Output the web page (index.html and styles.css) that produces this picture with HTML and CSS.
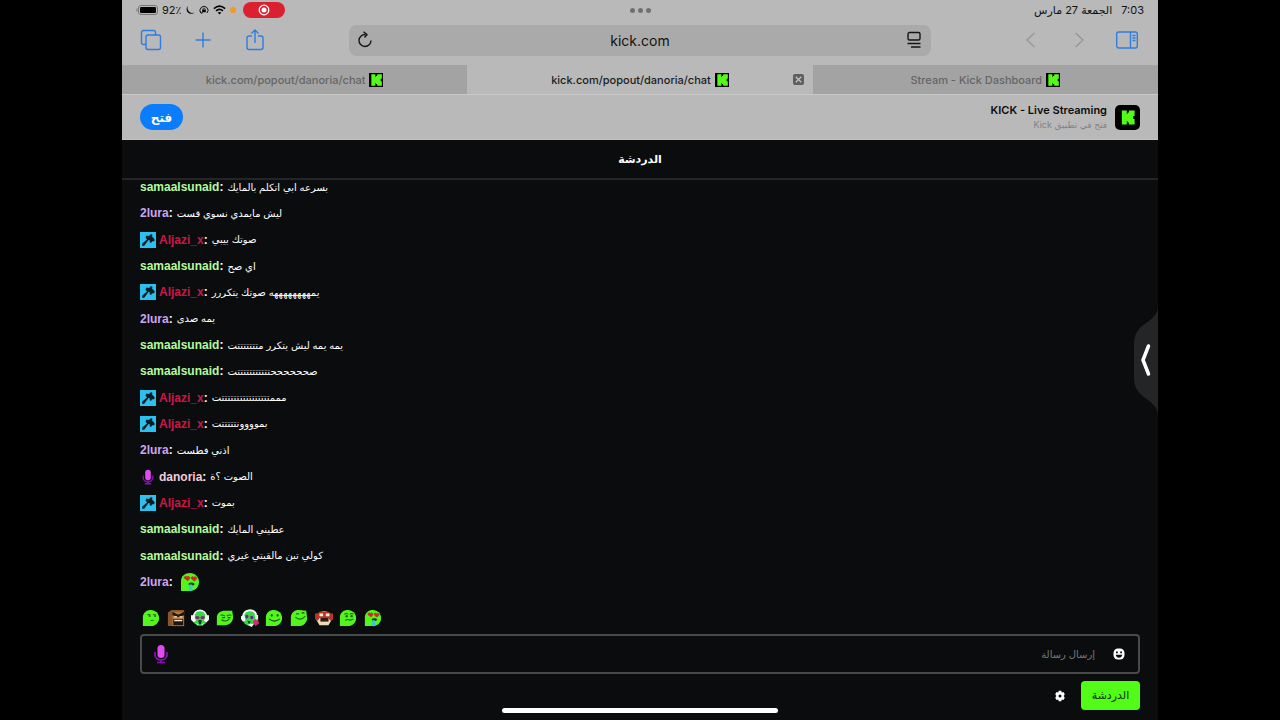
FILE: index.html
```html
<!DOCTYPE html>
<html lang="ar">
<head>
    <meta charset="UTF-8">
    <meta name="viewport" content="width=device-width, initial-scale=1.0">
    <title>kick.com/popout/danoria/chat</title>
    <link rel="stylesheet" href="styles.css">
</head>
<body>
    <!-- Shared icons -->
    <svg class="sprite" aria-hidden="true">
        <symbol id="kick" viewBox="0 0 24 24">
            <path d="M4 2h7v5h1V5h2V2h8v8h-2v4h2v8h-8v-3h-2v-2h-1v5H4z" fill="#53fc18"/>
        </symbol>
        <symbol id="hammer" viewBox="0 0 16 16">
            <path d="M0 0h16v16H0z" fill="#2cc0ee"/>
            <path d="M6.500 3.500L9 4l2-2 1.500 1-.5 1.500L14.500 7v2l-2.500.5-1 1.500-1.500-1 .5-1.500-1.500-.5L4 14l-2-.5.3-2L7 7.500 5.500 5.500z" fill="#081c26"/>
        </symbol>
        <symbol id="mic" viewBox="0 0 16 20">
            <rect x="4.500" y="1" width="7" height="13" rx="3.500" fill="#e04af0"/>
            <path d="M2 8v3a6 5 0 0 0 12 0V8M8 16v2M4 18.500h8" fill="none" stroke="#8a10b8" stroke-width="1.700"/>
        </symbol>
        <symbol id="love" viewBox="0 0 20 20">
            <path d="M1 19V9c0-5 4-8 9-8s9 4 9 9-4 9-9 9z" fill="#54f51c"/>
            <path d="M8 8.600L4.700 6.500c-1-2 1.300-3 2.300-1.300 1.300-1.500 3.300-.3 2.500 1.400zM14.500 9l-3-2.300c-.8-2 1.500-2.800 2.300-1.200 1.500-1.500 3.400 0 2.600 1.400z" fill="#d9222a" stroke="#d9222a"/>
            <ellipse cx="11.500" cy="12" rx="3" ry="1.600" fill="#0d4510"/>
            <path d="M9.300 12.500h3V18l-1.500 1.500L9 18z" fill="#36c9d8"/>
        </symbol>
        <symbol id="calm" viewBox="0 0 20 20">
            <path d="M1 19V9c0-5 4-8 9-8s9 4 9 9-4 9-9 9z" fill="#54f51c"/>
            <path d="M6 6.500q2-1 3.500 0M12 6.500q2-1 3.500 0M9.500 13q2-1 3.500 0" fill="none" stroke="#17641a"/>
            <circle cx="8.500" cy="7.800" r="1.100" fill="#17641a"/><circle cx="14.500" cy="7.800" r="1.100" fill="#17641a"/>
        </symbol>
        <symbol id="angry" viewBox="0 0 20 20">
            <path d="M1 4l4-3h14v18H1z" fill="#8a572a"/>
            <path d="M6 3h13v16H6z" fill="#b67b3e"/>
            <path d="M6 3l6 3h1l6-3v4l-6 2-7-2zM7 11h11v7H7z" fill="#24140b"/>
            <path d="M8 8h3v1.500H8zM14 8h3v1.500h-3zM8 12h9v1.500H8z" fill="#eee6da"/>
        </symbol>
        <symbol id="headset" viewBox="0 0 20 20">
            <circle cx="10" cy="10" r="8.500" fill="#38d548"/>
            <path d="M3 8C4-.5 16-.5 17 8" fill="none" stroke="#f0f7ef" stroke-width="2"/>
            <path d="M0 7h4l1.500 6L3 15l-3-3zM16 7h4v5l-3 3-2.500-2zM5 15l3 2v2zM15 15l-3 2v2z" fill="#f0f7ef"/>
            <ellipse cx="7" cy="9.500" rx="2.500" ry="1.800" fill="#8b2380"/><ellipse cx="13" cy="9.500" rx="2.500" ry="1.800" fill="#8b2380"/>
            <path d="M8 13q2-2 4 0l-1 4H9z" fill="#163d1c"/>
        </symbol>
        <symbol id="headset-tilt" viewBox="0 0 20 20">
            <circle cx="10" cy="10" r="8.500" fill="#38d548"/>
            <path d="M2 9C3 0 14-1 17 6" fill="none" stroke="#f0f7ef" stroke-width="2"/>
            <path d="M0 8l4-1 1 6-3 1-2-3zM15 5l4 2v5l-3-1zM9 16l5 1-2 3-4-2z" fill="#f0f7ef"/>
            <ellipse cx="6.500" cy="8.500" rx="1.800" ry="2" fill="#702099"/><ellipse cx="12" cy="9.500" rx="1.800" ry="2" fill="#702099"/>
            <path d="M13 14l3-3 1 2 2-1 1 4-4 3z" fill="#e32372"/>
            <path d="M7 13l4 1-2 3z" fill="#163d1c"/>
        </symbol>
        <symbol id="smirk" viewBox="0 0 20 20">
            <path d="M1 18V9c0-4 4-7 9-7h8l1 7c0 5-4 9-9 9z" fill="#54f51c"/>
            <path d="M5 7q2.500-1 5 1M12 8q2-2 5-1M6 12q5 3 9-1" fill="none" stroke="#17641a" stroke-width="1.200"/>
            <path d="M6.500 9H10v1.200H7zM13 9h3.500l-.5 1.200h-3z" fill="#17641a"/>
        </symbol>
        <symbol id="smile" viewBox="0 0 20 20">
            <path d="M1 19V9c0-5 4-8 9-8s9 4 9 9-4 9-9 9z" fill="#54f51c"/>
            <ellipse cx="7.500" cy="7" rx="1" ry="1.500" fill="#124a16"/><ellipse cx="14" cy="7" rx="1" ry="1.500" fill="#124a16"/>
            <path d="M4.500 11q6 5 12 0" fill="none" stroke="#124a16" stroke-width="1.200"/>
        </symbol>
        <symbol id="happy" viewBox="0 0 20 20">
            <path d="M1 19V9c0-5 4-8 9-8l8 1 1 8c0 5-4 9-9 9z" fill="#54f51c"/>
            <path d="M7 6q1-2 3 0M13 5q2-2 3 0M6 9q6 5 11-1" fill="none" stroke="#17641a" stroke-width="1.200"/>
        </symbol>
        <symbol id="rage" viewBox="0 0 20 20">
            <path d="M3 5q7-5 14 0l2 6-4 7H5l-4-7z" fill="#e9dcb8"/>
            <path d="M0 5h3l2-2h10l2 2h3v7l-3 1-2-3H5l-2 3-3-2z" fill="#b93424"/>
            <path d="M5 5h4v3H5zM12 5h4v3h-4z" fill="#fff3dc"/>
            <path d="M6 10h9v4H6z" fill="#3b1711"/>
        </symbol>
        <symbol id="unsure" viewBox="0 0 20 20">
            <path d="M1 19V9c0-5 4-8 9-8s9 4 9 9-4 9-9 9z" fill="#54f51c"/>
            <path d="M6 6q2-2 4 0M12 6q2-2 4 0M7 13q2-2 4-1t5-1" fill="none" stroke="#17641a" stroke-width="1.200"/>
            <circle cx="8.500" cy="8" r="1.300" fill="#17641a"/><circle cx="14" cy="8" r="1.300" fill="#17641a"/>
        </symbol>
    </svg>

    <div class="device">
        <header class="browser">
            <div class="status">
                <div class="status-icons">
                    <svg class="battery" viewBox="0 0 22 10"><path d="M1 3.500v3" stroke="#777" fill="none"/><rect x="2.500" y=".5" width="19" height="9" rx="2.500" fill="none" stroke="#777"/><rect x="4" y="2" width="16" height="6" rx="1.200"/></svg>
                    <span>92٪</span>
                    <svg class="small-icon" viewBox="0 0 10 10"><path d="M3 .8A4.500 4.500 0 1 0 9.500 7.500 5 5 0 0 1 3 .8z"/></svg>
                    <svg class="small-icon" viewBox="0 0 10 10"><path d="M2 8A4 4 0 1 1 8 8M1 6.500L2.200 8.300 4 7.500" fill="none" stroke="#111"/><path d="M3.200 4.700h3.600v2.500H3.200z"/><path d="M4 5V3.500q1-1 2 0V5" fill="none" stroke="#111" stroke-width=".7"/></svg>
                    <svg class="wifi" viewBox="0 0 12 9"><path d="M.8 3.300q5.200-4.600 10.400 0M2.800 5.400q3.200-2.800 6.400 0" fill="none" stroke="#000" stroke-width="1.500"/><path d="M4.300 6.900q1.700-1.300 3.400 0L6 8.700z"/></svg>
                    <span class="dot"></span>
                    <span class="recording"><svg viewBox="0 0 12 12"><circle cx="6" cy="6" r="4.800" fill="none" stroke="#fff" stroke-width="1.300"/><circle cx="6" cy="6" r="2.500" fill="#fff"/></svg></span>
                </div>
                <div class="dots"><i></i><i></i><i></i></div>
                <div class="clock"><span dir="rtl">الجمعة 27 مارس</span><span>7:03</span></div>
            </div>

            <div class="toolbar">
                <div class="tools">
                    <button type="button" class="tool" aria-label="Tabs"><svg viewBox="0 0 22 22"><path d="M6 15.500H3.500a2 2 0 0 1-2-2v-10a2 2 0 0 1 2-2h10a2 2 0 0 1 2 2V6"/><rect x="6" y="6" width="14.500" height="14.500" rx="2"/></svg></button>
                    <button type="button" class="tool" aria-label="New tab"><svg viewBox="0 0 22 22"><path d="M11 3.500v15M3.500 11h15"/></svg></button>
                    <button type="button" class="tool" aria-label="Share"><svg viewBox="0 0 22 22"><path d="M8 7H5a2 2 0 0 0-2 2v9.500a2 2 0 0 0 2 2h12a2 2 0 0 0 2-2V9a2 2 0 0 0-2-2h-3M11 14V1.500M7.500 4.500L11 1l3.500 3.500"/></svg></button>
                </div>
                <div class="address">
                    <button type="button" class="address-button" aria-label="Reload"><svg viewBox="0 0 18 18"><path d="M8.500 3.500A6 6 0 1 0 14 9.500M6.500.8l3.500 2.700L7.500 6.500"/></svg></button>
                    <span>kick.com</span>
                    <button type="button" class="address-button" aria-label="Page menu"><svg viewBox="0 0 18 18"><rect x="3" y="1.500" width="12" height="7.500" rx="1.500"/><path d="M2.500 12.500h13M6 16h9.500"/></svg></button>
                </div>
                <div class="tools tools-end">
                    <button type="button" class="tool off" aria-label="Back"><svg viewBox="0 0 22 22"><path d="M14.500 4l-7.500 7 7.500 7"/></svg></button>
                    <button type="button" class="tool off" aria-label="Forward"><svg viewBox="0 0 22 22"><path d="M7.500 4l7.500 7-7.500 7"/></svg></button>
                    <button type="button" class="tool" aria-label="Sidebar"><svg viewBox="0 0 22 22"><rect x=".7" y="3" width="20.600" height="16" rx="2"/><path d="M14.500 3v16M16.500 6.500h3M16.500 9h3M16.500 11.500h3"/></svg></button>
                </div>
            </div>

            <nav class="tabs">
                <div class="tab"><a href="#">kick.com/popout/danoria/chat</a><svg class="favicon"><use href="#kick"/></svg></div>
                <div class="tab active"><a href="#">kick.com/popout/danoria/chat</a><svg class="favicon"><use href="#kick"/></svg><button type="button" class="close" aria-label="Close tab"><svg viewBox="0 0 10 10"><path d="M2.500 2.500l5 5M7.500 2.500l-5 5"/></svg></button></div>
                <div class="tab"><a href="#">Stream - Kick Dashboard</a><svg class="favicon"><use href="#kick"/></svg></div>
            </nav>
        </header>

        <section class="banner">
            <button type="button" class="open">فتح</button>
            <div class="app">
                <div>
                    <div class="app-name">KICK - Live Streaming</div>
                    <div class="app-note" dir="rtl">فتح في تطبيق Kick</div>
                </div>
                <svg class="app-icon"><use href="#kick"/></svg>
            </div>
        </section>

        <main class="chat">
            <h1>الدردشة</h1>
            <ul class="messages">
                <li><b class="green">samaalsunaid</b><b>:</b><bdi>بسرعه ابي اتكلم بالمايك</bdi></li>
                <li><b class="purple">2lura</b><b>:</b><bdi>ليش مايمدي نسوي قست</bdi></li>
                <li><svg class="badge"><use href="#hammer"/></svg><b class="red">Aljazi_x</b><b>:</b><bdi>صوتك بيبي</bdi></li>
                <li><b class="green">samaalsunaid</b><b>:</b><bdi>اي صح</bdi></li>
                <li><svg class="badge"><use href="#hammer"/></svg><b class="red">Aljazi_x</b><b>:</b><bdi>يمههههههههه صوتك يتكررر</bdi></li>
                <li><b class="purple">2lura</b><b>:</b><bdi>يمه صدى</bdi></li>
                <li><b class="green">samaalsunaid</b><b>:</b><bdi>يمه يمه ليش يتكرر متتتتتتتت</bdi></li>
                <li><b class="green">samaalsunaid</b><b>:</b><bdi>صححححححتتتتتتتتتتتت</bdi></li>
                <li><svg class="badge"><use href="#hammer"/></svg><b class="red">Aljazi_x</b><b>:</b><bdi>مممتتتتتتتتتتتتتتتتت</bdi></li>
                <li><svg class="badge"><use href="#hammer"/></svg><b class="red">Aljazi_x</b><b>:</b><bdi>بموووونتتتتتت</bdi></li>
                <li><b class="purple">2lura</b><b>:</b><bdi>اذني فطست</bdi></li>
                <li><svg class="badge"><use href="#mic"/></svg><b class="pink">danoria</b><b>:</b><bdi>الصوت ؟ة</bdi></li>
                <li><svg class="badge"><use href="#hammer"/></svg><b class="red">Aljazi_x</b><b>:</b><bdi>بموت</bdi></li>
                <li><b class="green">samaalsunaid</b><b>:</b><bdi>عطيني المايك</bdi></li>
                <li><b class="green">samaalsunaid</b><b>:</b><bdi>كولي تبن مالقيتي غيري</bdi></li>
                <li><b class="purple">2lura</b><b>:</b><svg class="emote"><use href="#love"/></svg></li>
            </ul>

            <div class="quick">
                <button type="button" aria-label="calm"><svg><use href="#calm"/></svg></button>
                <button type="button" aria-label="angry"><svg><use href="#angry"/></svg></button>
                <button type="button" aria-label="headset"><svg><use href="#headset"/></svg></button>
                <button type="button" aria-label="smirk"><svg><use href="#smirk"/></svg></button>
                <button type="button" aria-label="headset tilt"><svg><use href="#headset-tilt"/></svg></button>
                <button type="button" aria-label="smile"><svg><use href="#smile"/></svg></button>
                <button type="button" aria-label="happy"><svg><use href="#happy"/></svg></button>
                <button type="button" aria-label="rage"><svg><use href="#rage"/></svg></button>
                <button type="button" aria-label="unsure"><svg><use href="#unsure"/></svg></button>
                <button type="button" aria-label="love"><svg><use href="#love"/></svg></button>
            </div>

            <div class="composer">
                <svg class="composer-badge"><use href="#mic"/></svg>
                <input type="text" dir="rtl" placeholder="إرسال رسالة" aria-label="إرسال رسالة">
                <button type="button" class="icon-button" aria-label="Emotes"><svg viewBox="0 0 12 12"><rect x=".5" y=".5" width="11" height="11" rx="4.500" fill="#fff"/><path d="M3 3.500h1.800v1.800H3zM7.200 3.500H9v1.800H7.200zM2.700 6.700h6.600q-.6 3-3.300 3t-3.300-3z" fill="#0b0c0e"/></svg></button>
            </div>

            <div class="actions">
                <button type="button" class="icon-button" aria-label="Settings"><svg viewBox="0 0 12 12"><path d="M4.700.8h2.600l.4 1.600 1.700-.5 1.400 2.400L9.600 6l1.200 1.700-1.400 2.400-1.700-.5-.4 1.600H4.700l-.4-1.600-1.700.5-1.400-2.400L2.400 6 1.200 4.300l1.400-2.400 1.700.5zM6 4.500a1.500 1.500 0 1 0 0 3 1.500 1.500 0 0 0 0-3z" fill="#fff" fill-rule="evenodd"/></svg></button>
                <button type="button" class="send">الدردشة</button>
            </div>
        </main>

        <!-- Slide over handle -->
        <svg class="handle" viewBox="0 0 24 110"><path d="M24 0C24 18 0 15 0 38v34c0 22 24 20 24 38z" fill="#242527"/><path d="M14.500 40L9 54l5.500 14" fill="none" stroke="#fff" stroke-width="3.500" stroke-linecap="round" stroke-linejoin="round"/></svg>
        <div class="home"></div>
    </div>
</body>
</html>
```
FILE: styles.css
```css
* {
    box-sizing: border-box;
}

body {
    margin: 0;
    padding: 0 122px;
    background: #000;
    font-family: Inter, "DejaVu Sans", sans-serif;
}

button {
    padding: 0;
    border: 0;
    background: none;
    font-family: inherit;
    cursor: pointer;
}

svg {
    display: block;
    flex-shrink: 0;
}

.sprite {
    position: absolute;
    width: 0;
    height: 0;
}

.device {
    position: relative;
    display: flex;
    flex-direction: column;
    min-height: 100vh;
    background: #0b0c0e;
}

/* Browser bars */
.browser {
    background: #b9b9ba;
    color: #111;
}

.status {
    display: grid;
    grid-template-columns: 1fr auto 1fr;
    align-items: center;
    height: 20px;
    padding: 0 14px;
    font-size: 11px;
}

.status-icons {
    display: flex;
    align-items: center;
    gap: 4px;
}

.battery {
    width: 22px;
    height: 10px;
}

.small-icon {
    width: 10px;
    height: 10px;
}

.wifi {
    width: 13px;
    height: 10px;
}

.dot {
    width: 6px;
    height: 6px;
    border-radius: 50%;
    background: #f29a1f;
}

.recording {
    display: flex;
    align-items: center;
    justify-content: center;
    width: 42px;
    height: 16px;
    margin-left: 3px;
    border-radius: 8px;
    background: #db2130;
}

.recording svg {
    width: 12px;
    height: 12px;
}

.dots {
    display: flex;
    gap: 3px;
}

.dots i {
    width: 5px;
    height: 5px;
    border-radius: 50%;
    background: #707071;
}

.clock {
    display: flex;
    justify-content: flex-end;
    gap: 9px;
}

.toolbar {
    display: grid;
    grid-template-columns: 1fr 582px 1fr;
    align-items: center;
    height: 45px;
    padding: 0 18px 5px;
}

.tools {
    display: flex;
    gap: 30px;
}

.tools-end {
    justify-content: flex-end;
    gap: 26px;
    padding-right: 2px;
}

.tool svg {
    width: 22px;
    height: 22px;
    fill: none;
    stroke: #2f7de0;
    stroke-width: 1.4;
}

.off svg {
    stroke: #979798;
}

.address {
    display: flex;
    align-items: center;
    justify-content: space-between;
    height: 31px;
    padding: 0 8px;
    border-radius: 8px;
    background: #aaaaab;
    font-size: 14px;
}

.address-button svg {
    width: 18px;
    height: 18px;
    fill: none;
    stroke: #151515;
    stroke-width: 1.4;
}

.tabs {
    display: flex;
    height: 30px;
    border-bottom: 1px solid #c9c9ca;
}

.tab {
    position: relative;
    display: flex;
    flex: 1;
    align-items: center;
    justify-content: center;
    gap: 4px;
    background: #a3a3a4;
    font-size: 11px;
    font-weight: 500;
}

.tab a {
    color: #656566;
    text-decoration: none;
}

.active {
    background: #b9b9ba;
}

.active a {
    color: #1c1c1d;
}

.favicon {
    width: 14px;
    height: 14px;
    background: #000;
}

.close {
    position: absolute;
    right: 9px;
}

.close svg {
    width: 11px;
    height: 11px;
    border-radius: 2px;
    background: #5f5f60;
    stroke: #c9c9ca;
}

/* App banner */
.banner {
    display: flex;
    align-items: center;
    justify-content: space-between;
    height: 45px;
    padding: 0 18px;
    border-bottom: 1px solid #c0c0c1;
    background: #b9b9ba;
}

.open {
    width: 43px;
    height: 26px;
    border-radius: 13px;
    background: #0c7dfa;
    color: #fff;
    font-size: 12px;
    font-weight: 700;
}

.app {
    display: flex;
    align-items: center;
    gap: 8px;
}

.app-name {
    color: #0c0c0c;
    font-size: 11px;
    font-weight: 600;
    line-height: 16px;
}

.app-note {
    color: #828283;
    font-size: 9px;
    line-height: 14px;
    text-align: right;
}

.app-icon {
    width: 25px;
    height: 25px;
    padding: 4px;
    border-radius: 5px;
    background: #000;
}

/* Chat */
.chat {
    display: flex;
    flex: 1;
    flex-direction: column;
    color: #fff;
    font-family: "Liberation Sans", "DejaVu Sans", sans-serif;
}

.chat h1 {
    z-index: 1;
    height: 40px;
    margin: 0;
    border-bottom: 2px solid #242527;
    background: #0b0c0e;
    font-size: 11px;
    line-height: 38px;
    text-align: center;
}

/* The oldest line slides under the heading */
.messages {
    display: grid;
    flex: 1;
    grid-auto-rows: 1fr;
    margin: -6px 0 0;
    padding: 0 18px;
    list-style: none;
    font-size: 12px;
}

.messages li {
    display: flex;
    align-items: center;
}

.messages bdi {
    margin-left: 4px;
    font-size: 10px;
}

.badge {
    width: 16px;
    height: 16px;
    margin-right: 3px;
}

.emote {
    width: 20px;
    height: 20px;
    margin-left: 7px;
}

.green {
    color: #b4fb9b;
}

.purple {
    color: #cda4f2;
}

.red {
    color: #cb1647;
}

.pink {
    color: #f5cbd8;
}

.quick {
    display: flex;
    justify-content: space-between;
    width: 240px;
    margin: 14px 20px 7px;
}

.quick svg {
    width: 18px;
    height: 18px;
}

.composer {
    display: flex;
    align-items: center;
    height: 40px;
    margin: 0 18px;
    padding: 0 13px 0 11px;
    border: 2px solid #48494b;
    border-radius: 4px;
}

.composer-badge {
    width: 16px;
    height: 20px;
}

.composer input {
    flex: 1;
    min-width: 0;
    padding: 0 18px;
    border: 0;
    outline: 0;
    background: none;
    color: #fff;
    font-family: inherit;
    font-size: 10px;
}

.composer input::placeholder {
    color: #77787a;
}

.icon-button svg {
    width: 12px;
    height: 12px;
}

.actions {
    display: flex;
    align-items: center;
    justify-content: flex-end;
    gap: 15px;
    padding: 7px 18px 10px;
}

.send {
    width: 59px;
    height: 29px;
    border-radius: 4px;
    background: #53fc18;
    color: #0d300a;
    font-size: 11px;
}

.handle {
    position: absolute;
    top: 306px;
    right: 0;
    width: 24px;
    height: 110px;
}

.home {
    position: absolute;
    bottom: 7px;
    left: 50%;
    width: 276px;
    height: 5px;
    margin-left: -138px;
    border-radius: 3px;
    background: #fff;
}
```
